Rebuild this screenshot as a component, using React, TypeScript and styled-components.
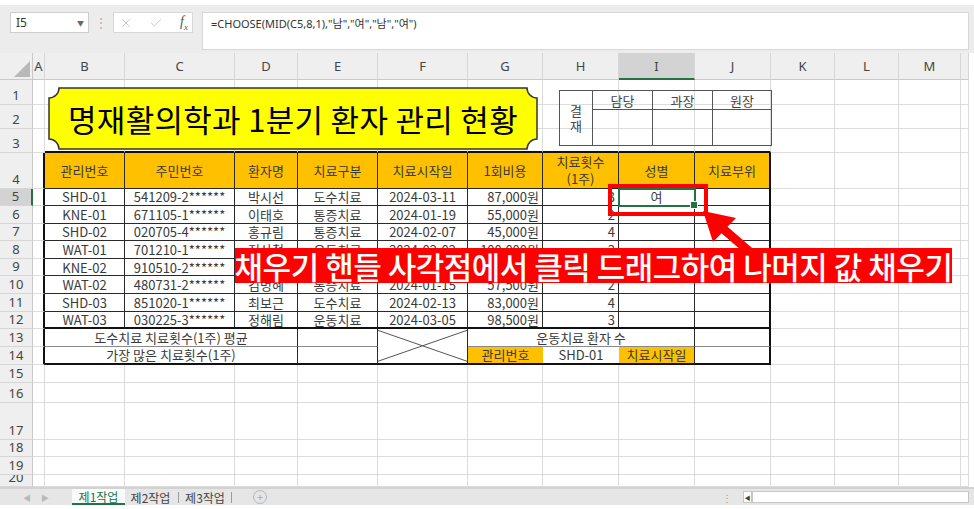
import React from "react";
import styled, { createGlobalStyle } from "styled-components";
import { X, Check } from "lucide-react";

type Edge = "grid" | "thin" | "thick" | "gray" | "none";
type Align = "left" | "center" | "right";

interface Spec {
  text?: React.ReactNode;
  span?: number;
  rowSpan?: number;
  align?: Align;
  fill?: string;
  r?: Edge;
  b?: Edge;
  diag?: boolean;
}

const ORANGE = "#ffc000";
const GREEN = "#217346";
const RED = "#ff0000";
const CJK = `"Noto Sans CJK KR", "Noto Sans", sans-serif`;
const UI = `"Noto Sans", "Noto Sans CJK KR", sans-serif`;

const edge = (e: Edge = "grid") => {
  switch (e) {
    case "thin":
      return "1px solid #2a2a2a";
    case "thick":
      return "2px solid #111";
    case "gray":
      return "1px solid #8a8a8a";
    case "none":
      return "none";
    default:
      return "1px solid #dcdcdc";
  }
};

const GlobalStyle = createGlobalStyle`
  html, body { margin: 0; padding: 0; background: #fff; }
  body { font-family: ${UI}; }
  * { box-sizing: border-box; }
`;

const Page = styled.div`
  width: 974px;
  height: 509px;
  display: flex;
  flex-direction: column;
  overflow: hidden;
  background: #fff;
`;

/* ---------- formula bar ---------- */
const FormulaArea = styled.div`
  margin-top: 5px;
  height: 48px;
  background: #ececec;
  display: flex;
  align-items: flex-start;
  padding: 7px 0 0 10px;
`;

const NameBox = styled.div`
  width: 79px;
  height: 21px;
  background: #fff;
  border: 1px solid #cdcdcd;
  display: flex;
  align-items: center;
  justify-content: space-between;
  padding: 0 4px 0 5px;
  font-family: ${UI};
  font-size: 12px;
  color: #333;
`;

const Caret = styled.span`
  font-size: 7px;
  color: #666;
`;

const Grip = styled.div`
  width: 24px;
  height: 21px;
  display: flex;
  align-items: center;
  justify-content: center;
  color: #b0b0b0;
  font-size: 12px;
`;

const FuncBox = styled.div`
  width: 80px;
  height: 21px;
  background: #fff;
  border: 1px solid #d8d8d8;
  display: flex;
  align-items: center;
  padding-left: 5px;
  gap: 16px;
  color: #b5b5b5;
`;

const Fx = styled.span`
  font-family: "Liberation Serif", serif;
  font-style: italic;
  font-size: 14px;
  color: #555;
  margin-left: 1px;
  sub {
    font-size: 9px;
  }
`;

const FormulaInput = styled.div`
  margin-left: 9px;
  width: 767px;
  height: 38px;
  background: #fff;
  border: 1px solid #d8d8d8;
  padding: 3px 8px;
  font-family: ${UI};
  font-size: 11px;
  line-height: 16px;
  color: #333;
`;

/* ---------- sheet ---------- */
const Sheet = styled.div`
  position: relative;
  width: 969px;
  height: 434px;
  overflow: hidden;
  display: grid;
  grid-template-columns: 33px 12px 80px 110px 63px 80px 90px 75px 76px 76px 76px 64px 64px 62px 8px;
  grid-template-rows:
    27px 25px 24px 24px 35.5px repeat(8, 17.6px) 17.6px 18px 18px 20px
    37px 17px 18px 12px;
`;

const Corner = styled.div`
  position: relative;
  background: #efefef;
  border-right: 1px solid #c9c9c9;
  border-bottom: 1px solid #c9c9c9;
  &::after {
    content: "";
    position: absolute;
    right: 2px;
    bottom: 2px;
    width: 16px;
    height: 16px;
    background: #b9b9b9;
    clip-path: polygon(100% 0, 100% 100%, 0 100%);
  }
`;

const ColHead = styled.div<{ $sel?: boolean }>`
  background: ${(p) => (p.$sel ? "#d3d3d3" : "#efefef")};
  border-right: 1px solid #d6d6d6;
  border-bottom: ${(p) => (p.$sel ? `2px solid ${GREEN}` : "1px solid #c9c9c9")};
  display: flex;
  align-items: center;
  justify-content: center;
  font-family: ${UI};
  font-size: 13px;
  color: #444;
`;

const RowHead = styled.div<{ $sel?: boolean }>`
  background: ${(p) => (p.$sel ? "#d3d3d3" : "#efefef")};
  border-right: ${(p) => (p.$sel ? `2px solid ${GREEN}` : "1px solid #c9c9c9")};
  border-bottom: 1px solid #d6d6d6;
  display: flex;
  align-items: flex-end;
  justify-content: center;
  padding-bottom: 1px;
  font-family: ${UI};
  font-size: 13px;
  line-height: 15px;
  color: #444;
  overflow: hidden;
`;

const Cell = styled.div<{
  $span: number;
  $rowSpan: number;
  $align: Align;
  $fill?: string;
  $r: Edge;
  $b: Edge;
}>`
  position: relative;
  grid-column: span ${(p) => p.$span};
  grid-row: span ${(p) => p.$rowSpan};
  border-right: ${(p) => edge(p.$r)};
  border-bottom: ${(p) => edge(p.$b)};
  background: ${(p) => p.$fill ?? "transparent"};
  display: flex;
  align-items: center;
  justify-content: ${(p) =>
    p.$align === "left" ? "flex-start" : p.$align === "right" ? "flex-end" : "center"};
  padding: 0 3px;
  min-width: 0;
  white-space: nowrap;
  font-family: ${CJK};
  font-size: 13px;
  line-height: 1;
  color: #3a3a3a;
`;

const Lines = styled.span`
  display: block;
  text-align: center;
  line-height: 17px;
  white-space: normal;
`;

const Diag = styled.svg`
  position: absolute;
  inset: 0;
  width: 100%;
  height: 100%;
  line {
    stroke: #555;
    stroke-width: 1;
  }
`;

/* ---------- overlays ---------- */
const Plaque = styled.div`
  position: absolute;
  left: 48px;
  top: 34px;
  width: 490px;
  height: 63px;
  display: flex;
  align-items: center;
  justify-content: center;
  z-index: 2;
`;

const PlaqueShape = styled.svg`
  position: absolute;
  inset: 0;
  path {
    fill: #ffff00;
    stroke: #333;
    stroke-width: 1.5;
  }
`;

const PlaqueTitle = styled.span`
  position: relative;
  font-family: ${CJK};
  font-size: 31px;
  letter-spacing: 0.3px;
  line-height: 1;
  color: #000;
  white-space: nowrap;
`;

const Approval = styled.div`
  position: absolute;
  left: 559px;
  top: 37px;
  display: grid;
  grid-template-columns: 33px 60px 60px 59px;
  grid-template-rows: 19px 36px;
  border-top: 1px solid #555;
  border-left: 1px solid #555;
  z-index: 2;
`;

const ApprovalCell = styled.div<{ $tall?: boolean }>`
  grid-row: span ${(p) => (p.$tall ? 2 : 1)};
  border-right: 1px solid #555;
  border-bottom: 1px solid #555;
  display: flex;
  align-items: center;
  justify-content: center;
  text-align: center;
  font-family: ${CJK};
  font-size: 13px;
  line-height: 15px;
  color: #444;
`;

const Selection = styled.div`
  position: absolute;
  left: 618px;
  top: 135px;
  width: 78px;
  height: 19px;
  border: 2px solid ${GREEN};
  z-index: 1;
  &::after {
    content: "";
    position: absolute;
    right: -4px;
    bottom: -4px;
    width: 6px;
    height: 6px;
    background: ${GREEN};
    border: 1px solid #fff;
  }
`;

const RedBox = styled.div`
  position: absolute;
  left: 608px;
  top: 131px;
  width: 100px;
  height: 32px;
  border: 4px solid ${RED};
  z-index: 3;
`;

const Arrow = styled.svg`
  position: absolute;
  left: 690px;
  top: 147px;
  width: 80px;
  height: 60px;
  z-index: 3;
  polygon {
    fill: ${RED};
  }
`;

const Banner = styled.div`
  position: absolute;
  left: 235px;
  top: 195px;
  width: 717px;
  height: 35px;
  background: ${RED};
  display: flex;
  align-items: center;
  justify-content: center;
  font-family: ${CJK};
  font-weight: 500;
  font-size: 31px;
  letter-spacing: -0.5px;
  line-height: 1;
  color: #fff;
  white-space: nowrap;
  z-index: 4;
`;

/* ---------- tab bar ---------- */
const TabBar = styled.div`
  height: 18px;
  background: #e6e6e6;
  border-top: 2px solid #d2d2d2;
  display: flex;
  align-items: stretch;
  font-family: ${CJK};
  font-size: 12px;
`;

const Nav = styled.div`
  width: 72px;
  display: flex;
  align-items: center;
  gap: 10px;
  padding-left: 23px;
  color: #b9b9b9;
  font-size: 8px;
`;

const Tab = styled.div<{ $active?: boolean; $w: number }>`
  width: ${(p) => p.$w}px;
  display: flex;
  align-items: center;
  justify-content: center;
  background: ${(p) => (p.$active ? "#fafafa" : "transparent")};
  color: ${(p) => (p.$active ? GREEN : "#444")};
  border-bottom: ${(p) => (p.$active ? `2px solid ${GREEN}` : "none")};
`;

const TabDivider = styled.div`
  width: 1px;
  height: 11px;
  align-self: center;
  background: #9a9a9a;
  margin: 0 2px;
`;

const AddTab = styled.div`
  margin-left: 19px;
  align-self: center;
  width: 14px;
  height: 14px;
  border: 1px solid #b5b5b5;
  border-radius: 50%;
  display: flex;
  align-items: center;
  justify-content: center;
  color: #aaa;
  font-size: 11px;
  line-height: 1;
`;

const RightGroup = styled.div`
  margin-left: auto;
  margin-right: 5px;
  display: flex;
  align-items: center;
  gap: 10px;
`;

const Dots = styled.div`
  width: 12px;
  text-align: center;
  color: #9a9a9a;
  font-size: 10px;
`;

const ScrollBtn = styled.div`
  width: 9px;
  height: 12px;
  margin-right: -10px;
  background: #fff;
  border: 1px solid #c6c6c6;
  display: flex;
  align-items: center;
  justify-content: center;
  font-size: 6px;
  color: #444;
`;

const Track = styled.div`
  width: 217px;
  height: 12px;
  background: #fff;
  border: 1px solid #c6c6c6;
`;

/* ---------- data ---------- */
const COLS = ["A", "B", "C", "D", "E", "F", "G", "H", "I", "J", "K", "L", "M", ""];

const HEADERS: React.ReactNode[] = [
  "관리번호",
  "주민번호",
  "환자명",
  "치료구분",
  "치료시작일",
  "1회비용",
  <Lines key="h">
    치료횟수
    <br />
    (1주)
  </Lines>,
  "성별",
  "치료부위",
];

const RECORDS: string[][] = [
  ["SHD-01", "541209-2******", "박시선", "도수치료", "2024-03-11", "87,000원", "3", "여", ""],
  ["KNE-01", "671105-1******", "이태호", "통증치료", "2024-01-19", "55,000원", "2", "", ""],
  ["SHD-02", "020705-4******", "홍규림", "통증치료", "2024-02-07", "45,000원", "4", "", ""],
  ["WAT-01", "701210-1******", "정상철", "운동치료", "2024-02-02", "100,000원", "3", "", ""],
  ["KNE-02", "910510-2******", "윤지아", "통증치료", "2024-01-23", "62,000원", "3", "", ""],
  ["WAT-02", "480731-2******", "김명혜", "통증치료", "2024-01-15", "57,500원", "2", "", ""],
  ["SHD-03", "851020-1******", "최보근", "도수치료", "2024-02-13", "83,000원", "4", "", ""],
  ["WAT-03", "030225-3******", "정해림", "운동치료", "2024-03-05", "98,500원", "3", "", ""],
];

const ALIGNS: Align[] = ["center", "center", "center", "center", "center", "right", "right", "center", "center"];

const buildRow = (r: number): Spec[] => {
  const cells: Spec[] = [];
  const inTable = r >= 4 && r <= 14;
  cells.push({ r: inTable ? "thick" : "grid" });
  if (r === 3) {
    for (let i = 0; i < 9; i++) cells.push({ b: "thick" });
  } else if (r === 4) {
    HEADERS.forEach((h, i) =>
      cells.push({ text: h, fill: ORANGE, r: i === 8 ? "thick" : "thin", b: "thin" })
    );
  } else if (r >= 5 && r <= 12) {
    RECORDS[r - 5].forEach((v, i) =>
      cells.push({
        text: v,
        align: ALIGNS[i],
        r: i === 8 ? "thick" : "thin",
        b: r === 12 ? "thick" : "thin",
      })
    );
  } else if (r === 13) {
    cells.push({ text: "도수치료 치료횟수(1주) 평균", span: 3, r: "thin", b: "gray" });
    cells.push({ r: "thin", b: "gray" });
    cells.push({ rowSpan: 2, diag: true, r: "thin", b: "thick" });
    cells.push({ text: "운동치료 환자 수", span: 3, r: "thin", b: "gray" });
    cells.push({ r: "thick", b: "gray" });
  } else if (r === 14) {
    cells.push({ text: "가장 많은 치료횟수(1주)", span: 3, r: "thin", b: "thick" });
    cells.push({ r: "thin", b: "thick" });
    cells.push({ text: "관리번호", fill: ORANGE, r: "none", b: "thick" });
    cells.push({ text: "SHD-01", r: "none", b: "thick" });
    cells.push({ text: "치료시작일", fill: ORANGE, r: "thin", b: "thick" });
    cells.push({ r: "thick", b: "thick" });
  } else {
    for (let i = 0; i < 9; i++) cells.push({});
  }
  for (let i = 0; i < 4; i++) cells.push({});
  return cells;
};

const ROWS = Array.from({ length: 20 }, (_, i) => buildRow(i + 1));

const plaquePath = (() => {
  const x0 = 1,
    y0 = 1,
    x1 = 489,
    y1 = 62,
    r = 10;
  return `M${x0 + r},${y0} H${x1 - r} A${r},${r} 0 0 0 ${x1},${y0 + r} V${y1 - r} A${r},${r} 0 0 0 ${x1 - r},${y1} H${x0 + r} A${r},${r} 0 0 0 ${x0},${y1 - r} V${y0 + r} A${r},${r} 0 0 0 ${x0 + r},${y0} Z`;
})();

export default function App() {
  return (
    <>
      <GlobalStyle />
      <Page>
        <FormulaArea>
          <NameBox>
            <span>I5</span>
            <Caret>▼</Caret>
          </NameBox>
          <Grip>⋮</Grip>
          <FuncBox>
            <X size={14} strokeWidth={1.3} />
            <Check size={14} strokeWidth={1.3} />
            <Fx>
              f<sub>x</sub>
            </Fx>
          </FuncBox>
          <FormulaInput>=CHOOSE(MID(C5,8,1),"남","여","남","여")</FormulaInput>
        </FormulaArea>

        <Sheet>
          <Corner />
          {COLS.map((c, i) => (
            <ColHead key={`h${i}`} $sel={c === "I"}>
              {c}
            </ColHead>
          ))}
          {ROWS.map((cells, ri) => (
            <React.Fragment key={`r${ri}`}>
              <RowHead $sel={ri + 1 === 5}>{ri + 1}</RowHead>
              {cells.map((s, ci) => (
                <Cell
                  key={`c${ri}-${ci}`}
                  $span={s.span ?? 1}
                  $rowSpan={s.rowSpan ?? 1}
                  $align={s.align ?? "center"}
                  $fill={s.fill}
                  $r={s.r ?? "grid"}
                  $b={s.b ?? "grid"}
                >
                  {s.diag && (
                    <Diag viewBox="0 0 100 100" preserveAspectRatio="none">
                      <line x1="0" y1="4" x2="100" y2="96" vectorEffect="non-scaling-stroke" />
                      <line x1="0" y1="96" x2="100" y2="4" vectorEffect="non-scaling-stroke" />
                    </Diag>
                  )}
                  {s.text}
                </Cell>
              ))}
            </React.Fragment>
          ))}

          <Plaque>
            <PlaqueShape viewBox="0 0 490 63">
              <path d={plaquePath} />
            </PlaqueShape>
            <PlaqueTitle>명재활의학과 1분기 환자 관리 현황</PlaqueTitle>
          </Plaque>

          <Approval>
            <ApprovalCell $tall>
              결
              <br />재
            </ApprovalCell>
            <ApprovalCell>담당</ApprovalCell>
            <ApprovalCell>과장</ApprovalCell>
            <ApprovalCell>원장</ApprovalCell>
            <ApprovalCell />
            <ApprovalCell />
            <ApprovalCell />
          </Approval>

          <Selection />
          <RedBox />
          <Arrow viewBox="0 0 80 60">
            <polygon points="13,11 46,18 37.5,26.7 63,48.7 57,55.3 31.5,33.3 23,42" />
          </Arrow>
          <Banner>채우기 핸들 사각점에서 클릭 드래그하여 나머지 값 채우기</Banner>
        </Sheet>

        <TabBar>
          <Nav>
            <span>◀</span>
            <span>▶</span>
          </Nav>
          <Tab $active $w={53}>
            제1작업
          </Tab>
          <Tab $w={51}>제2작업</Tab>
          <TabDivider />
          <Tab $w={48}>제3작업</Tab>
          <TabDivider />
          <AddTab>+</AddTab>
          <RightGroup>
            <Dots>⋮</Dots>
            <ScrollBtn>◀</ScrollBtn>
            <Track />
          </RightGroup>
        </TabBar>
      </Page>
    </>
  );
}
